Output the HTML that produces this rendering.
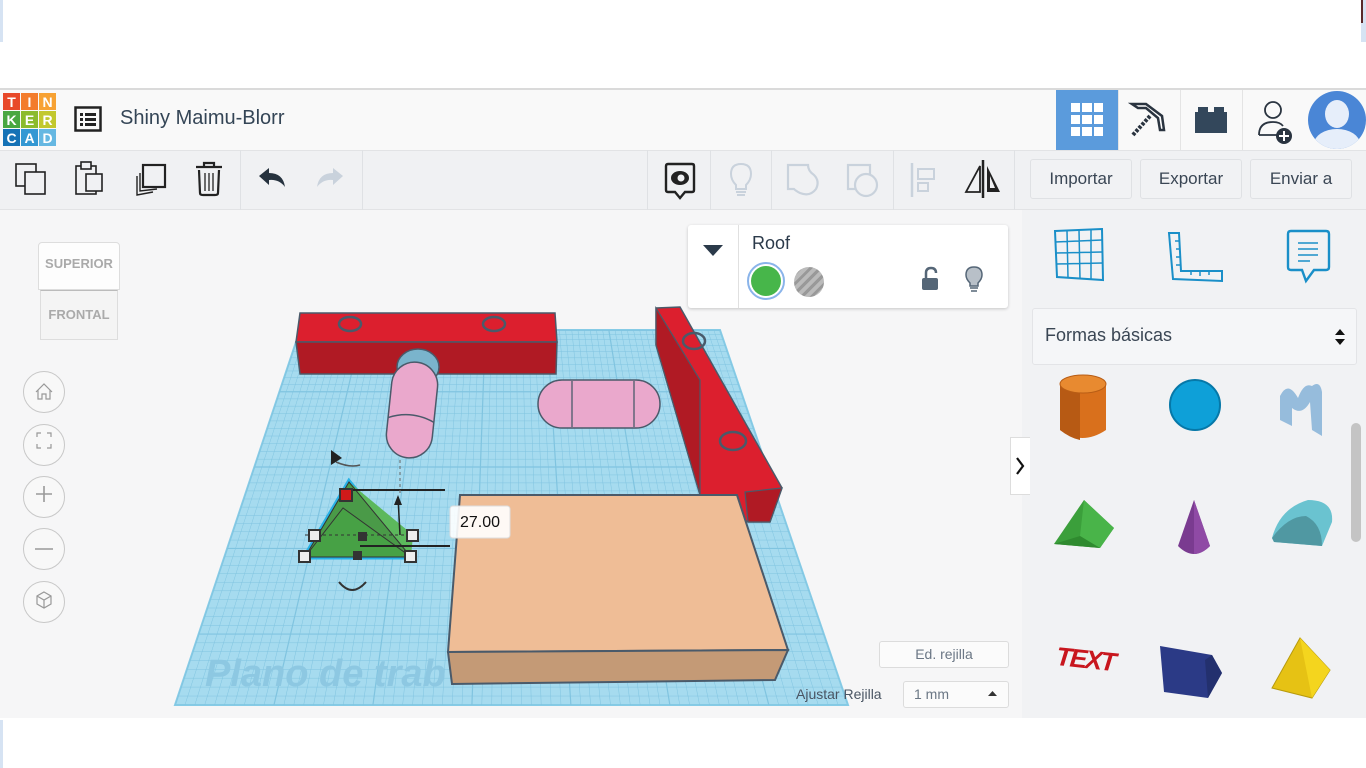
<!DOCTYPE html>
<html><head><meta charset="utf-8"><style>
*{margin:0;padding:0;box-sizing:border-box}
body{width:1366px;height:768px;overflow:hidden;background:#fff;font-family:"Liberation Sans",sans-serif;position:relative}
.abs{position:absolute}
#hdr{left:0;top:88px;width:1366px;height:62px;background:#f9f9f9;border-top:2px solid #dadada}
#tb{left:0;top:150px;width:1366px;height:60px;background:#f0f1f3;border-top:1px solid #e2e3e5;border-bottom:1px solid #e2e3e5}
#main{left:0;top:210px;width:1022px;height:508px;background:#f6f6f7}
#side{left:1022px;top:210px;width:344px;height:508px;background:#f1f2f4}
.btn{position:absolute;top:159px;height:40px;border:1px solid #dfe1e4;border-radius:3px;background:#f1f2f4;color:#3a4654;font-size:17px;text-align:center;line-height:38px}
.sep{position:absolute;top:150px;width:1px;height:60px;background:#dfe1e4}
.circ{position:absolute;left:23px;width:42px;height:42px;border:1px solid #c8c8c8;border-radius:50%;background:#f8f8f8}
</style></head><body>
<div class="abs" style="left:0;top:0;width:3px;height:42px;background:#d6e3f3"></div>
<div class="abs" style="left:1361px;top:0;width:5px;height:42px;background:#d6e3f3"></div>
<div class="abs" style="left:1361px;top:0;width:2px;height:23px;background:#5a2a2a"></div>

<div id="hdr" class="abs">
 <svg class="abs" style="left:3px;top:3px" width="54" height="54" viewBox="0 0 54 54" font-family="Liberation Sans" font-weight="bold" font-size="14" fill="#fff" text-anchor="middle">
  <rect x="0" y="0" width="17" height="17" fill="#e8492a"/><rect x="18" y="0" width="17" height="17" fill="#f37c2c"/><rect x="36" y="0" width="17" height="17" fill="#f7a234"/>
  <rect x="0" y="18" width="17" height="17" fill="#49a741"/><rect x="18" y="18" width="17" height="17" fill="#8bbb2e"/><rect x="36" y="18" width="17" height="17" fill="#c2c82e"/>
  <rect x="0" y="36" width="17" height="17" fill="#1572b6"/><rect x="18" y="36" width="17" height="17" fill="#3498d3"/><rect x="36" y="36" width="17" height="17" fill="#66b8e2"/>
  <text x="8.5" y="14">T</text><text x="26.5" y="14">I</text><text x="44.5" y="14">N</text>
  <text x="8.5" y="32">K</text><text x="26.5" y="32">E</text><text x="44.5" y="32">R</text>
  <text x="8.5" y="50">C</text><text x="26.5" y="50">A</text><text x="44.5" y="50">D</text>
 </svg>
 <svg class="abs" style="left:74px;top:16px" width="28" height="26" viewBox="0 0 28 26"><rect x="1.5" y="1.5" width="25" height="23" fill="none" stroke="#222" stroke-width="2.5"/><g fill="#222"><rect x="6" y="7" width="3" height="3"/><rect x="11" y="7" width="11" height="3"/><rect x="6" y="12" width="3" height="3"/><rect x="11" y="12" width="11" height="3"/><rect x="6" y="17" width="3" height="3"/><rect x="11" y="17" width="11" height="3"/></g></svg>
 <div class="abs" style="left:120px;top:17px;font-size:20px;color:#344556">Shiny Maimu-Blorr</div>
 <div class="abs" style="left:1056px;top:0;width:62px;height:60px;background:#5b9bdc"></div>
 <svg class="abs" style="left:1071px;top:13px" width="32" height="33"><g fill="#fff"><rect x="0" y="0" width="9" height="9"/><rect x="11" y="0" width="10" height="9"/><rect x="23" y="0" width="9" height="9"/><rect x="0" y="12" width="9" height="9"/><rect x="11" y="12" width="10" height="9"/><rect x="23" y="12" width="9" height="9"/><rect x="0" y="24" width="9" height="9"/><rect x="11" y="24" width="10" height="9"/><rect x="23" y="24" width="9" height="9"/></g></svg>
 <div class="abs" style="left:1118px;top:0;width:1px;height:60px;background:#e4e4e4"></div>
 <svg class="abs" style="left:1128px;top:10px" width="42" height="40" viewBox="0 0 42 40"><path d="M4 4 L18 4 L34 16 L36 30 L32 30 L30 18 L18 8 L10 8 Z" fill="#fff" stroke="#2a3440" stroke-width="2.5"/><path d="M22 16 L4 36" stroke="#2a3440" stroke-width="4" stroke-dasharray="3 1.5"/></svg>
 <div class="abs" style="left:1180px;top:0;width:1px;height:60px;background:#e4e4e4"></div>
 <svg class="abs" style="left:1195px;top:17px" width="32" height="26"><rect x="0" y="5" width="32" height="21" fill="#33475b"/><rect x="3" y="0" width="10" height="7" fill="#33475b"/><rect x="19" y="0" width="10" height="7" fill="#33475b"/></svg>
 <div class="abs" style="left:1242px;top:0;width:1px;height:60px;background:#e4e4e4"></div>
 <svg class="abs" style="left:1256px;top:10px" width="46" height="46"><circle cx="17" cy="10" r="8" fill="none" stroke="#2a3440" stroke-width="1.8"/><path d="M3 35 Q3 22 17 22 Q24 22 27 26" fill="none" stroke="#2a3440" stroke-width="1.8"/><path d="M3 35 L22 35" stroke="#2a3440" stroke-width="1.8"/><circle cx="28" cy="36" r="8" fill="#2a3440"/><path d="M28 31v10M23 36h10" stroke="#fff" stroke-width="2"/></svg>
 <div class="abs" style="left:1308px;top:1px;width:58px;height:58px;border-radius:50%;background:#4a86d6;overflow:hidden">
  <div class="abs" style="left:17px;top:9px;width:24px;height:28px;border-radius:50%;background:#e6eefa"></div>
  <div class="abs" style="left:6px;top:38px;width:46px;height:30px;border-radius:50% 50% 0 0;background:#e6eefa"></div>
 </div>
</div>

<div id="tb" class="abs"></div>
<svg class="abs" style="left:14px;top:162px" width="34" height="34"><rect x="2" y="2" width="20" height="22" fill="#f0f1f3" stroke="#222" stroke-width="1.6"/><rect x="11" y="10" width="20" height="22" fill="#f0f1f3" stroke="#222" stroke-width="1.6"/></svg>
<svg class="abs" style="left:74px;top:161px" width="32" height="36"><rect x="2" y="5" width="20" height="28" fill="#f0f1f3" stroke="#222" stroke-width="1.6"/><rect x="7" y="1" width="10" height="7" fill="#f0f1f3" stroke="#222" stroke-width="1.6"/><rect x="12" y="13" width="16" height="17" fill="#f0f1f3" stroke="#222" stroke-width="1.6"/></svg>
<svg class="abs" style="left:133px;top:162px" width="36" height="36"><path d="M4 14 L4 33 L20 30" fill="none" stroke="#222" stroke-width="1.4"/><path d="M7 11 L7 29 L24 27" fill="none" stroke="#222" stroke-width="1.4"/><rect x="10" y="3" width="22" height="22" fill="#f0f1f3" stroke="#222" stroke-width="2.2"/></svg>
<svg class="abs" style="left:194px;top:160px" width="30" height="38"><path d="M2 7 H28 M10 7 V3 H20 V7" fill="none" stroke="#222" stroke-width="2.2"/><path d="M5 10 L6 33 Q6 35 9 35 H21 Q24 35 24 33 L25 10" fill="none" stroke="#222" stroke-width="2.2"/><path d="M11 13 V31 M15 13 V31 M19 13 V31" stroke="#222" stroke-width="1.3"/></svg>
<div class="sep" style="left:240px"></div>
<svg class="abs" style="left:257px;top:167px" width="30" height="22"><path d="M2 9 L12 1 L12 6 Q26 6 28 20 Q22 12 12 13 L12 18 Z" fill="#26323e"/></svg>
<svg class="abs" style="left:315px;top:167px" width="30" height="22"><path d="M28 9 L18 1 L18 6 Q4 6 2 20 Q8 12 18 13 L18 18 Z" fill="#c9d2dc"/></svg>
<div class="sep" style="left:362px"></div>
<div class="sep" style="left:647px"></div>
<svg class="abs" style="left:664px;top:162px" width="32" height="38"><path d="M4 2 H28 Q30 2 30 4 V28 Q30 30 28 30 H21 L16 36 L11 30 H4 Q2 30 2 28 V4 Q2 2 4 2 Z" fill="#f0f1f3" stroke="#222" stroke-width="2.4"/><ellipse cx="16" cy="16" rx="9" ry="7" fill="#222"/><circle cx="17" cy="16" r="3.5" fill="#f0f1f3"/></svg>
<div class="sep" style="left:710px"></div>
<svg class="abs" style="left:728px;top:162px" width="26" height="36"><path d="M13 2 Q23 2 23 12 Q23 18 18 23 V27 H8 V23 Q3 18 3 12 Q3 2 13 2 Z" fill="none" stroke="#c9d2dc" stroke-width="2"/><path d="M8 30 H18 M9 33 H17" stroke="#c9d2dc" stroke-width="2"/></svg>
<div class="sep" style="left:771px"></div>
<svg class="abs" style="left:786px;top:163px" width="36" height="36"><path d="M2 2 H22 Q22 8 28 12 Q34 18 30 26 Q24 34 14 30 Q10 28 8 26 H2 Z" fill="none" stroke="#c9d2dc" stroke-width="2.2"/></svg>
<svg class="abs" style="left:846px;top:163px" width="36" height="36"><rect x="2" y="2" width="22" height="24" fill="none" stroke="#c9d2dc" stroke-width="2.2"/><circle cx="20" cy="22" r="11" fill="#f0f1f3" stroke="#c9d2dc" stroke-width="2.2"/></svg>
<div class="sep" style="left:893px"></div>
<svg class="abs" style="left:909px;top:161px" width="30" height="38"><path d="M3 2 V36" stroke="#c9d2dc" stroke-width="2.5"/><rect x="9" y="8" width="16" height="10" fill="none" stroke="#c9d2dc" stroke-width="2"/><rect x="9" y="22" width="10" height="8" fill="none" stroke="#c9d2dc" stroke-width="2"/></svg>
<svg class="abs" style="left:962px;top:158px" width="42" height="42"><path d="M18 8 L4 34 H18 Z" fill="none" stroke="#222" stroke-width="1.8"/><path d="M21 2 V40" stroke="#222" stroke-width="2.5"/><path d="M25 8 L38 34 H25 Z" fill="#222"/><path d="M28 18 L33 30 H28Z" fill="#f0f1f3"/></svg>
<div class="sep" style="left:1014px"></div>
<div class="btn" style="left:1030px;width:102px">Importar</div>
<div class="btn" style="left:1140px;width:102px">Exportar</div>
<div class="btn" style="left:1250px;width:102px">Enviar a</div>

<div id="main" class="abs"></div>
<div id="side" class="abs"></div>

<!-- Workplane -->
<svg class="abs" style="left:0;top:210px" width="1022" height="508" viewBox="0 210 1022 508">
 <defs><clipPath id="gc"><polygon points="300,330 720,330 848,705 175,705"/></clipPath></defs>
 <polygon points="300,330 720,330 848,705 175,705" fill="#a6dbef" stroke="#86cbe6" stroke-width="2"/>
 <g id="grid" clip-path="url(#gc)" stroke="#80c4e0" stroke-width="0.6" fill="none"></g>
 <text x="205" y="686" font-size="38" font-weight="bold" font-style="italic" fill="#8dc8e2" font-family="Liberation Sans">Plano de trab</text>
 <!-- top red bar -->
 <polygon points="300,313 555,313 557,342 296,342" fill="#dc1f2e" stroke="#4a5a6a" stroke-width="1.5"/>
 <polygon points="296,342 557,342 556,374 300,374" fill="#b01a24" stroke="#4a5a6a" stroke-width="1.5"/>
 <ellipse cx="350" cy="324" rx="11" ry="7" fill="none" stroke="#4a5a6a" stroke-width="2.5"/>
 <ellipse cx="494" cy="324" rx="11" ry="7" fill="none" stroke="#4a5a6a" stroke-width="2.5"/>
 <!-- hole cylinder -->
 <ellipse cx="418" cy="367" rx="21" ry="18" fill="#7ab4cc" stroke="#4a5a6a" stroke-width="1.5"/>
 <!-- pink vertical capsule -->
 <g transform="rotate(6 412 410)"><rect x="389" y="362" width="46" height="96" rx="23" fill="#eaa8cc" stroke="#4a5a6a" stroke-width="1.5"/><path d="M389 420 Q412 410 435 420" fill="none" stroke="#4a5a6a" stroke-width="1.5"/></g>
 <!-- pink horizontal capsule -->
 <rect x="538" y="380" width="122" height="48" rx="24" fill="#eaa8cc" stroke="#4a5a6a" stroke-width="1.5"/>
 <path d="M572 381 V427 M634 381 V427" stroke="#4a5a6a" stroke-width="1.3"/>
 <!-- right red bar -->
 <polygon points="656,308 680,307 782,488 770,522 748,522 700,495 656,345" fill="#dc1f2e" stroke="#4a5a6a" stroke-width="1.5"/>
 <polygon points="656,308 656,345 700,495 700,380" fill="#b01a24" stroke="#4a5a6a" stroke-width="1.2"/>
 <polygon points="745,492 782,488 770,522 748,522" fill="#b01a24" stroke="#4a5a6a" stroke-width="1.2"/>
 <ellipse cx="694" cy="341" rx="11" ry="8" fill="none" stroke="#4a5a6a" stroke-width="2.5"/>
 <ellipse cx="733" cy="441" rx="13" ry="9" fill="none" stroke="#4a5a6a" stroke-width="2.5"/>
 <!-- peach box -->
 <polygon points="460,495 737,495 788,650 448,652" fill="#efbd96" stroke="#4a5a6a" stroke-width="2"/>
 <polygon points="448,652 788,650 775,680 452,684" fill="#c49a76" stroke="#4a5a6a" stroke-width="2"/>
 <!-- green pyramid -->
 <polygon points="349,482 305,557 411,557" fill="#27b2e6" stroke="#27b2e6" stroke-width="5"/>
 <polygon points="349,482 413,535 411,557" fill="#5cb85c"/>
 <polygon points="349,482 305,557 411,557" fill="#4a9a48" stroke="#333" stroke-width="1"/>
 <polygon points="343,508 305,557 411,557" fill="#47a145" stroke="#333" stroke-width="1"/>
 <path d="M305 535 H413" stroke="#333" stroke-dasharray="3 3"/>
 <path d="M349 490 H445 M360 546 H450" stroke="#222" stroke-width="2"/>
 <path d="M400 535 L398 497" stroke="#222" stroke-width="1.5"/><path d="M394 505 L398 495 L402 505Z" fill="#222"/>
 <path d="M400 460 V495" stroke="#666" stroke-dasharray="3 3"/>
 <g fill="#eee" stroke="#333" stroke-width="2"><rect x="309" y="530" width="11" height="11"/><rect x="407" y="530" width="11" height="11"/><rect x="299" y="551" width="11" height="11"/><rect x="405" y="551" width="11" height="11"/></g>
 <rect x="340" y="489" width="12" height="12" fill="#d01a1a" stroke="#333" stroke-width="2"/>
 <rect x="358" y="532" width="9" height="9" fill="#333"/><rect x="353" y="551" width="9" height="9" fill="#333"/>
 <path d="M331 450 L342 458 L331 465Z" fill="#222"/><path d="M336 462 Q350 468 360 465" fill="none" stroke="#555" stroke-width="1.5"/>
 <path d="M339 582 Q352 598 366 582" fill="none" stroke="#333" stroke-width="2"/>
 <rect x="450" y="506" width="60" height="32" rx="3" fill="#fff" fill-opacity="0.9" stroke="#ddd"/>
 <text x="480" y="527" font-size="16" text-anchor="middle" fill="#111" font-family="Liberation Sans">27.00</text>
</svg>

<!-- view cube -->
<div class="abs" style="left:38px;top:242px;width:82px;height:48px;background:#fdfdfd;border:1px solid #ddd;border-radius:4px 4px 0 0"></div>
<div class="abs" style="left:40px;top:290px;width:78px;height:50px;background:#f4f4f4;border:1px solid #ddd;border-top:1px solid #bbb"></div>
<div class="abs" style="left:38px;top:256px;width:82px;text-align:center;font-size:13px;font-weight:bold;color:#aaa">SUPERIOR</div>
<div class="abs" style="left:38px;top:307px;width:82px;text-align:center;font-size:13px;font-weight:bold;color:#aaa">FRONTAL</div>
<div class="circ" style="top:371px"></div><div class="circ" style="top:424px"></div><div class="circ" style="top:476px"></div><div class="circ" style="top:528px"></div><div class="circ" style="top:581px"></div>
<svg class="abs" style="left:23px;top:371px" width="42" height="252" fill="none" stroke="#999" stroke-width="1.2">
 <path d="M13 21 L21 13 L29 21 M15 19 V28 H19 V23 H23 V28 H27 V19"/>
 <path d="M14 66 V62 H18 M24 62 H28 V66 M28 73 V77 H24 M18 77 H14 V73"/>
 <path d="M21 115 V131 M13 123 H29" stroke-width="1.6"/>
 <path d="M12 178 H30" stroke-width="1.6"/>
 <path d="M21 221 L28 225 V233 L21 237 L14 233 V225 Z M14 225 L21 229 L28 225 M21 229 V237"/>
</svg>

<!-- Roof panel -->
<div class="abs" style="left:688px;top:225px;width:320px;height:83px;background:#fff;border-radius:3px;box-shadow:0 1px 3px rgba(0,0,0,.2)"></div>
<div class="abs" style="left:738px;top:225px;width:1px;height:83px;background:#e0e0e0"></div>
<svg class="abs" style="left:703px;top:245px" width="20" height="12"><path d="M0 0 H20 L10 11Z" fill="#2b3a4a"/></svg>
<div class="abs" style="left:752px;top:233px;font-size:18px;color:#2b3a4a">Roof</div>
<div class="abs" style="left:747px;top:262px;width:38px;height:38px;border-radius:50%;border:2px solid #8ab4ea;background:#fff"></div>
<div class="abs" style="left:751px;top:266px;width:30px;height:30px;border-radius:50%;background:#47b64a"></div>
<div class="abs" style="left:794px;top:267px;width:30px;height:30px;border-radius:50%;background:repeating-linear-gradient(135deg,#bbb 0 4px,#999 4px 7px)"></div>
<svg class="abs" style="left:920px;top:266px" width="22" height="26"><path d="M6 12 V7 Q6 2 11 2 Q16 2 16 7" fill="none" stroke="#556677" stroke-width="2.5"/><rect x="2" y="12" width="16" height="12" rx="2" fill="#556677"/></svg>
<svg class="abs" style="left:964px;top:265px" width="20" height="28"><path d="M10 2 Q18 2 18 10 Q18 14 14 18 V21 H6 V18 Q2 14 2 10 Q2 2 10 2Z" fill="#b8c0c8" stroke="#556677" stroke-width="1.5"/><path d="M6 23 H14 M7 26 H13" stroke="#556677" stroke-width="1.5"/></svg>

<!-- grid controls -->
<div class="abs" style="left:879px;top:641px;width:130px;height:27px;border:1px solid #dcdcdc;border-radius:3px;background:#fbfbfb;text-align:center;font-size:14px;line-height:25px;color:#6b7785">Ed. rejilla</div>
<div class="abs" style="left:796px;top:686px;font-size:14px;color:#4a5563">Ajustar Rejilla</div>
<div class="abs" style="left:903px;top:681px;width:106px;height:27px;border:1px solid #dcdcdc;border-radius:3px;background:#fbfbfb;font-size:14px;line-height:25px;color:#6b7785;padding-left:10px">1 mm</div>
<svg class="abs" style="left:988px;top:691px" width="9" height="6"><path d="M0 5 L4.5 0 L9 5Z" fill="#333"/></svg>

<!-- collapse tab -->
<div class="abs" style="left:1010px;top:437px;width:20px;height:58px;background:#fff;border:1px solid #ddd;border-right:none"></div>
<svg class="abs" style="left:1014px;top:456px" width="12" height="20"><path d="M3 2 L9 10 L3 18" fill="none" stroke="#111" stroke-width="2.2"/></svg>

<!-- sidebar icons -->
<svg class="abs" style="left:1052px;top:228px" width="54" height="54" stroke="#1a8fc8" stroke-width="2" fill="none"><path d="M3 3 L50 1 L51 52 L5 49 Z"/><path d="M3 14 L50 12 M4 25 L50 24 M4 36 L51 35 M15 3 L16 50 M27 2 L28 51 M39 2 L39 51" stroke-width="1.5"/></svg>
<svg class="abs" style="left:1166px;top:231px" width="58" height="52" stroke="#1a8fc8" stroke-width="2" fill="none"><path d="M3 2 H13 L15 40 L56 40 L56 50 L7 48 Z"/><path d="M13 10 H9 M13 18 H10 M14 26 H10 M14 34 H10 M25 40 V44 M34 40 V45 M43 40 V44" stroke-width="1.5"/></svg>
<svg class="abs" style="left:1286px;top:229px" width="46" height="56" stroke="#1a8fc8" stroke-width="2.4" fill="none"><path d="M5 2 H40 Q43 2 43 5 V38 Q43 41 40 41 H28 L20 52 L16 41 H5 Q2 41 2 38 V5 Q2 2 5 2Z"/><path d="M12 14 H32 M12 20 H32 M12 26 H32 M12 32 H24" stroke-width="1.5"/></svg>
<div class="abs" style="left:1032px;top:308px;width:325px;height:57px;background:#f5f6f8;border:1px solid #e3e4e7;border-radius:3px"></div>
<div class="abs" style="left:1045px;top:325px;font-size:18px;color:#3a4654">Formas básicas</div>
<svg class="abs" style="left:1334px;top:327px" width="12" height="20"><path d="M1 8 L6 2 L11 8Z M1 12 L6 18 L11 12Z" fill="#111"/></svg>
<div class="abs" style="left:1351px;top:423px;width:10px;height:119px;border-radius:5px;background:#c4c4c4"></div>

<!-- shapes -->
<svg class="abs" style="left:1040px;top:370px" width="310" height="340">
 <path d="M20 14 V60 Q42 76 66 60 V14Z" fill="#d9701c"/><path d="M20 14 V60 Q30 68 40 70 V22Z" fill="#b75a14"/><ellipse cx="43" cy="14" rx="23" ry="9" fill="#e88a30" stroke="#b85d15"/>
 <circle cx="155" cy="35" r="25" fill="#0ea0d8"/><circle cx="155" cy="35" r="25" fill="none" stroke="#0678a8" stroke-width="2"/>
 <path d="M240 26 Q248 10 258 28 Q264 12 272 16 Q280 10 282 22 V66 L272 60 L270 32 Q262 46 252 38 L252 56 L240 50Z" fill="#96bcdc"/>
 <path d="M14 174 L44 130 L74 158 L60 178Z" fill="#3b9f3b"/><path d="M44 130 L74 158 L60 178 L40 166Z" fill="#49b449"/><path d="M14 174 L40 166 L60 178Z" fill="#2f8a2f"/>
 <path d="M154 130 L170 176 Q154 192 138 176Z" fill="#7a3b90"/><path d="M154 130 L170 176 Q162 184 154 184Z" fill="#8f4aa5"/>
 <path d="M232 168 Q240 138 268 130 Q294 130 292 152 L282 176 L234 172Z" fill="#6ac3d0"/><path d="M232 168 Q248 146 266 146 Q282 154 282 176 L234 172Z" fill="#5098a2"/>
 <text x="16" y="298" font-size="26" font-weight="bold" font-style="italic" fill="#c8161e" font-family="Liberation Sans" transform="rotate(6 45 290)" letter-spacing="-2">TEXT</text>
 <path d="M120 276 L172 285 L182 303 L168 328 L124 322Z" fill="#2b3a86"/><path d="M172 285 L182 303 L168 328 L165 290Z" fill="#23306e"/>
 <path d="M260 268 L232 318 L272 328 L290 300Z" fill="#e6c214" stroke="#b79a0d"/><path d="M260 268 L290 300 L272 328Z" fill="#f4d51e"/>
</svg>

<div class="abs" style="left:0;top:720px;width:3px;height:48px;background:#d6e3f3"></div>
<script>
(function(){var g=document.getElementById('grid'),s='';var L=300,R=720,T=330,B=705,BL=175,BR=848;
for(var i=0;i<=68;i++){var t=i/68,yb=BL+(BR-BL)*t,yt=L+(R-L)*t;s+='<line x1="'+yt+'" y1="'+T+'" x2="'+yb+'" y2="'+B+'" stroke-width="'+(i%10==0?1.2:0.5)+'"/>';}
for(var j=0;j<=48;j++){var u=j/48;var y=T+(B-T)*Math.pow(u,1.15);s+='<line x1="100" y1="'+y+'" x2="900" y2="'+y+'" stroke-width="'+(j%10==0?1.2:0.5)+'"/>';}
g.innerHTML=s;})();
</script>
</body></html>
